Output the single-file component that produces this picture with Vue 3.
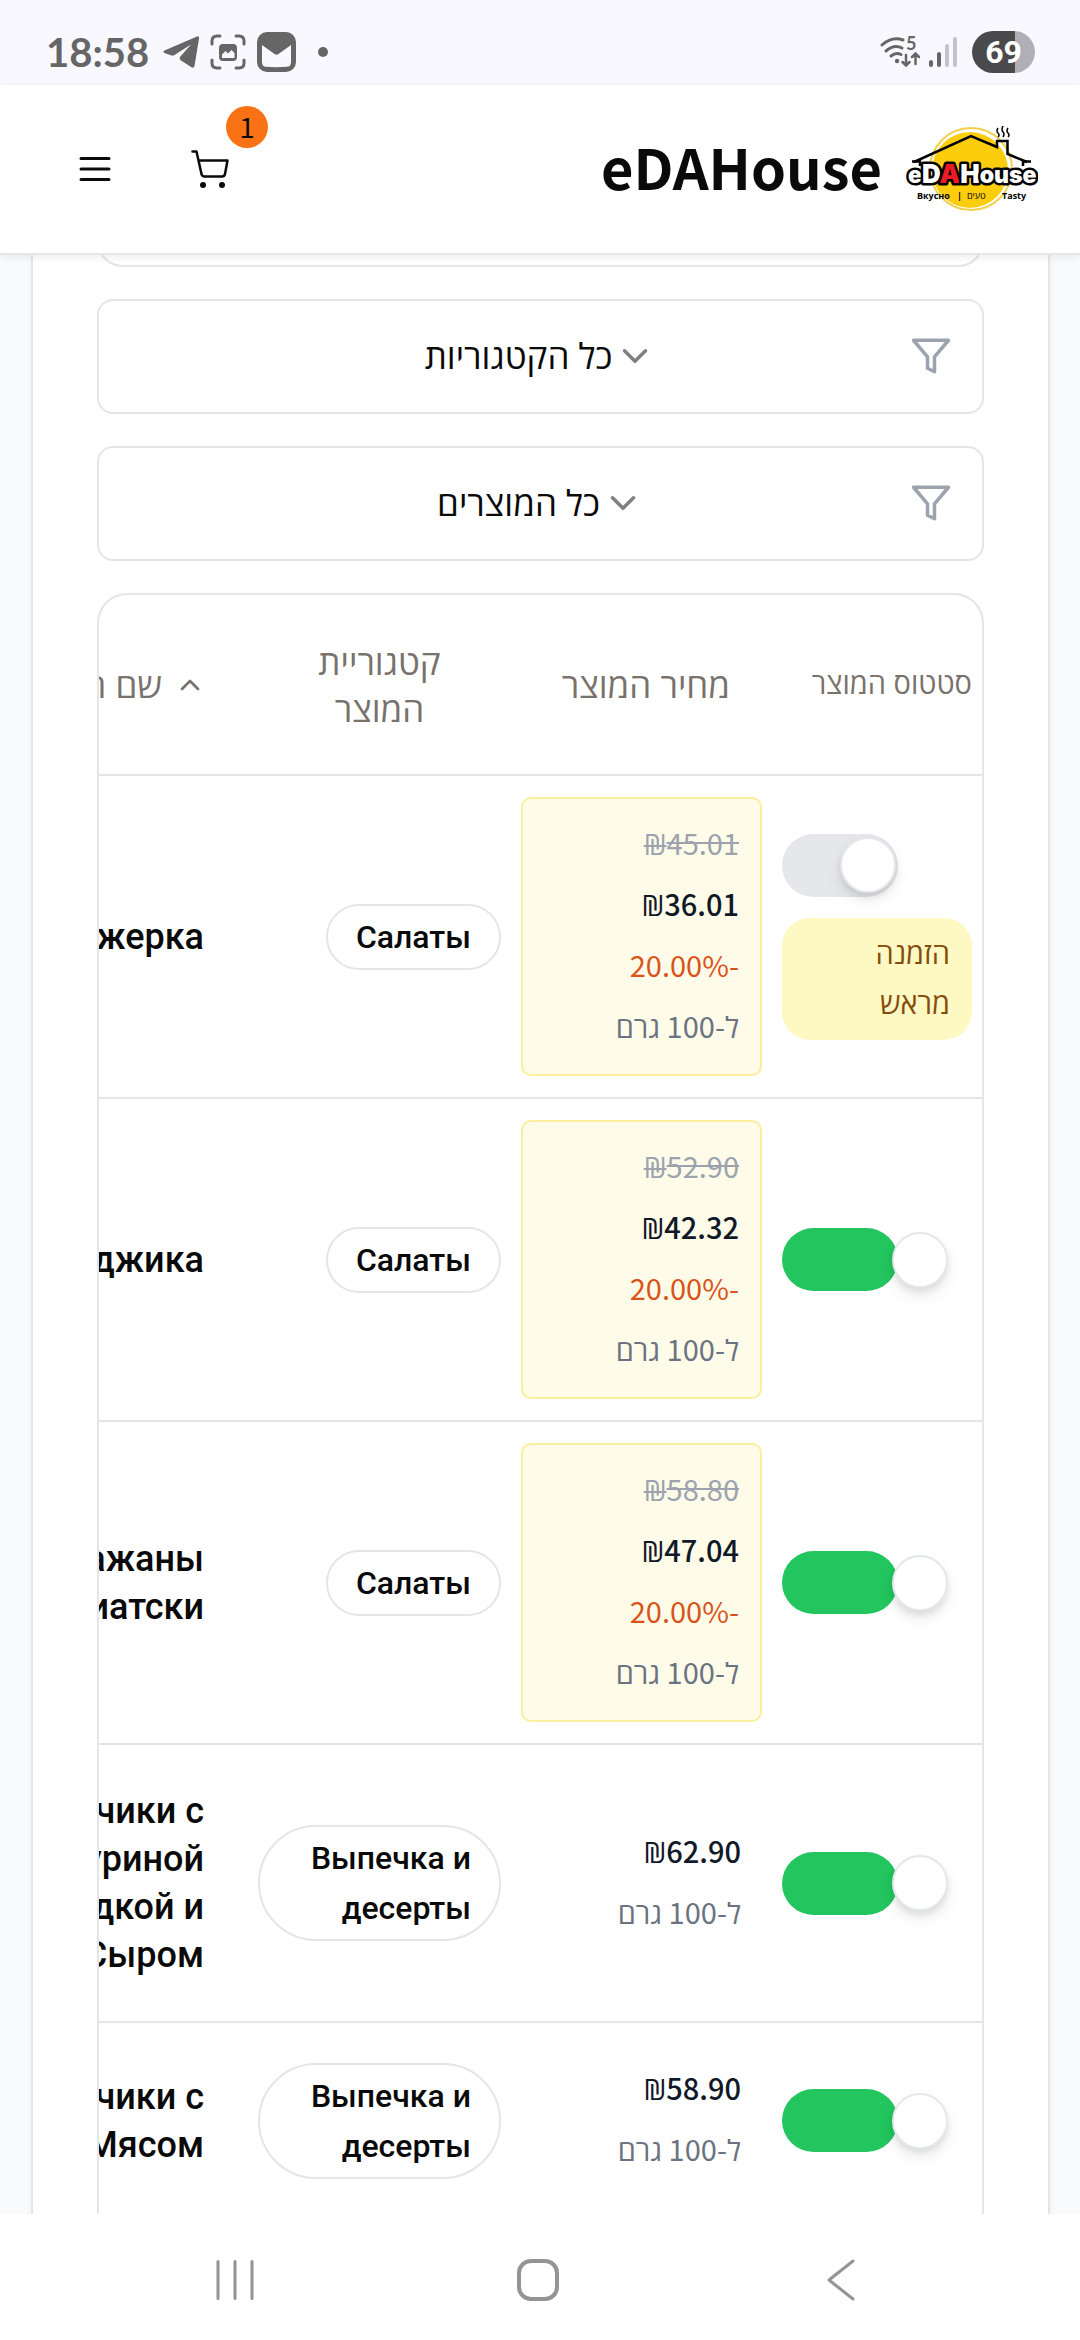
<script setup>
import { ref } from 'vue'

const categoryFilter = ref('all')
const productFilter = ref('all')

const products = ref([
  { id: 1, name: 'Аджерка', category: 'Салаты', oldPrice: '45.01', price: '36.01', discount: '-20.00%', active: false, preorder: true },
  { id: 2, name: 'Аджика', category: 'Салаты', oldPrice: '52.90', price: '42.32', discount: '-20.00%', active: true },
  { id: 3, name: 'Баклажаны по-азиатски', category: 'Салаты', oldPrice: '58.80', price: '47.04', discount: '-20.00%', active: true },
  { id: 4, name: 'Блинчики с Куриной грудкой и Сыром', category: 'Выпечка и десерты', price: '62.90', active: true },
  { id: 5, name: 'Блинчики с Мясом', category: 'Выпечка и десерты', price: '58.90', active: true },
])
</script>

<template>
  <div class="screen">
    <div class="status-bar">
      <div class="status-side">
        <span class="clock">18:58</span>
        <svg class="ic-telegram" width="36" height="32" viewBox="0 0 36 32" fill="#666"><path d="M1.500 14.500 34 .4Q36.300 0 36 2.500L31.500 30Q31 32.500 28.500 31.200L18 24.500Q15.500 22.500 17.600 20.200L28 8.500 11.500 19Q9.500 20 7 19L1.500 17Q-.8 15.800 1.500 14.500Z" /></svg>
        <svg class="ic-capture" width="36" height="36" viewBox="0 0 36 36">
          <path d="M2 10V7Q2 2 7 2H10M26 2H29Q34 2 34 7V10M34 26V29Q34 34 29 34H26M10 34H7Q2 34 2 29V26" fill="none" stroke="#666" stroke-width="3" stroke-linecap="round" />
          <rect x="9" y="10" width="18" height="17" rx="4" fill="#666" />
          <path d="M12 24V20.500L15.500 17 18 19.500 21.500 16 24.500 19V24Z" fill="#f9f8ff" />
        </svg>
        <svg width="39" height="40" viewBox="0 0 39 40">
          <rect width="39" height="40" rx="10" fill="#666" />
          <path d="M5 13 17.500 22Q19.500 23.500 21.500 22L34 13V30Q34 34.500 30 34.800 19.500 35.500 9 34.800 5 34.500 5 30Z" fill="#f9f8ff" />
        </svg>
        <span class="dot"></span>
      </div>
      <div class="status-side">
        <svg width="40" height="32" viewBox="0 0 40 32">
          <g fill="none" stroke="#666" stroke-width="3" stroke-linecap="round">
            <path d="M2 9Q12 0 23 4" /><path d="M6 15Q14 8 22 12" /><path d="M11 20Q16 16 21 18.500" />
            <path d="M26 19V29M22.500 26 26 29.500 29.500 26M35.500 28V18M32 21 35.500 17.500 39 21" stroke-width="2.500" />
          </g>
          <circle cx="17" cy="25" r="2.200" fill="#666" />
          <text x="26" y="14" font-family="Lato, sans-serif" font-weight="700" font-size="18" fill="#666">5</text>
        </svg>
        <svg class="ic-signal" width="28" height="30" viewBox="0 0 28 30" stroke-width="4" stroke-linecap="round">
          <path d="M2 25V28M10 17V28" stroke="#666" /><path d="M18 9V28M26 2V28" stroke="#c4c3c9" />
        </svg>
        <span class="battery">69</span>
      </div>
    </div>

    <header class="site-header">
      <nav class="header-actions">
        <button class="icon-btn" type="button" aria-label="תפריט">
          <svg width="32" height="26" viewBox="0 0 32 26" stroke="#0a0a0a" stroke-width="3" stroke-linecap="round"><path d="M2 2.500H30M2 13H30M2 23.500H30" /></svg>
        </button>
        <button class="icon-btn" type="button" aria-label="עגלה">
          <svg width="38" height="40" viewBox="0 0 38 40">
            <path d="M1.500 2.500H5.500L10.500 25Q11 27.500 13.500 27.500H31Q33.500 27.500 34 25L36.500 11.500H7.500" fill="none" stroke="#0a0a0a" stroke-width="2.500" stroke-linecap="round" stroke-linejoin="round" />
            <circle cx="12" cy="36" r="3" fill="#0a0a0a" /><circle cx="31" cy="36" r="3" fill="#0a0a0a" />
          </svg>
          <span class="cart-count">1</span>
        </button>
      </nav>
      <a class="brand" href="#">
        <span class="brand-name">eDAHouse</span>
        <svg width="132" height="86" viewBox="0 0 132 86" role="img" aria-label="eDAHouse">
          <circle cx="65" cy="43" r="41" fill="none" stroke="#f3cf4e" stroke-width="2" />
          <circle cx="64" cy="44" r="38" fill="#fbcd0c" />
          <g fill="none" stroke="#000" stroke-width="2.500">
            <path d="M8 36 65 10 91 21V15H101.500V28L121 36" /><path d="M6 35.500H14V40M125 35.500H117V40" />
            <path d="M92 2Q90 5 92 7T92 11M97 0Q95 4 97 6T97 11M102 2Q100 5 102 7T102 11" stroke-width="1.500" />
          </g>
          <g font-family="Inter, sans-serif" font-weight="900" font-size="23" paint-order="stroke" stroke="#000" stroke-width="5" stroke-linejoin="round" fill="#fff">
            <text x="2" y="56.500">e<tspan font-size="26">D</tspan><tspan font-size="26" fill="#ed1c24">A</tspan><tspan font-size="26">H</tspan>ouse</text>
          </g>
          <g font-family="'Open Sans', sans-serif" font-weight="700" font-size="9" fill="#000">
            <text x="11" y="73">Вкусно</text><text x="51" y="73">|</text><text x="61" y="73" font-weight="500">טעים</text><text x="96" y="73">Tasty</text>
          </g>
        </svg>
      </a>
    </header>

    <main class="page" dir="rtl">
      <section class="panel">
        <div class="panel-head"></div>

        <label class="filter">
          <svg class="funnel" width="42" height="42" viewBox="0 0 24 24" fill="none" stroke="#9ca3af" stroke-width="2" stroke-linejoin="round"><path d="M22 3H2l8 9.460V19l4 2v-8.540Z" /></svg>
          <svg width="42" height="42" viewBox="0 0 24 24" fill="none" stroke="#808080" stroke-width="2" stroke-linecap="round" stroke-linejoin="round"><path d="m6 9 6 6 6-6" /></svg>
          <select v-model="categoryFilter" aria-label="סינון לפי קטגוריה"><option value="all">כל הקטגוריות</option></select>
        </label>

        <label class="filter">
          <svg class="funnel" width="42" height="42" viewBox="0 0 24 24" fill="none" stroke="#9ca3af" stroke-width="2" stroke-linejoin="round"><path d="M22 3H2l8 9.460V19l4 2v-8.540Z" /></svg>
          <svg width="42" height="42" viewBox="0 0 24 24" fill="none" stroke="#808080" stroke-width="2" stroke-linecap="round" stroke-linejoin="round"><path d="m6 9 6 6 6-6" /></svg>
          <select v-model="productFilter" aria-label="סינון לפי מוצר"><option value="all">כל המוצרים</option></select>
        </label>

        <div class="table-wrap">
          <table>
            <colgroup><col class="c-status" /><col class="c-price" /><col class="c-category" /><col class="c-name" /></colgroup>
            <thead>
              <tr>
                <th class="th-status" scope="col">סטטוס המוצר</th>
                <th scope="col"><button class="sort" type="button">מחיר המוצר</button></th>
                <th scope="col"><button class="sort" type="button">קטגוריית המוצר</button></th>
                <th scope="col">
                  <button class="sort" type="button">
                    <svg width="32" height="32" viewBox="0 0 24 24" fill="none" stroke="#78716c" stroke-width="2" stroke-linecap="round" stroke-linejoin="round"><path d="m6 15 6-6 6 6" /></svg>
                    שם המוצר
                  </button>
                </th>
              </tr>
            </thead>
            <tbody>
              <tr v-for="p in products" :key="p.id">
                <td>
                  <div class="status">
                    <input v-model="p.active" class="switch" type="checkbox" role="switch" :aria-label="p.name" />
                    <span v-if="p.preorder" class="preorder">הזמנה מראש</span>
                  </div>
                </td>
                <td>
                  <div class="price" :class="{ sale: p.oldPrice }">
                    <s v-if="p.oldPrice"><span class="shekel">₪</span>{{ p.oldPrice }}</s>
                    <strong><span class="shekel">₪</span>{{ p.price }}</strong>
                    <span v-if="p.discount" class="discount">{{ p.discount }}</span>
                    <span class="unit">ל-100 גרם</span>
                  </div>
                </td>
                <td><span class="pill">{{ p.category }}</span></td>
                <td class="name">{{ p.name }}</td>
              </tr>
            </tbody>
          </table>
        </div>
      </section>
    </main>

    <nav class="system-nav">
      <button type="button" aria-label="Recents"><svg width="38" height="42" viewBox="0 0 38 42" stroke="#949494" stroke-width="3" stroke-linecap="round"><path d="M2 2.500V39.500M19 2.500V39.500M36 2.500V39.500" /></svg></button>
      <button type="button" aria-label="Home"><svg width="42" height="42" viewBox="0 0 42 42" fill="none" stroke="#949494" stroke-width="4"><rect x="2" y="2" width="38" height="38" rx="12" /></svg></button>
      <button type="button" aria-label="Back"><svg width="38" height="42" viewBox="0 0 38 42" fill="none" stroke="#949494" stroke-width="3" stroke-linecap="round" stroke-linejoin="round"><path d="M31 2 7 21 31 40" /></svg></button>
    </nav>
  </div>
</template>

<style>
body {
  margin: 0;
  background: #fff;
}
</style>

<style scoped>
* {
  box-sizing: border-box;
}
.screen {
  display: flex;
  flex-direction: column;
  height: 100vh;
  overflow: hidden;
  color: #0a0a0a;
  font-family: "Noto Sans CJK SC", "Open Sans", sans-serif;
}
button {
  border: 0;
  padding: 0;
  background: none;
  color: inherit;
  font: inherit;
}
svg {
  display: block;
  flex: none;
}

/* phone status bar */
.status-bar {
  display: flex;
  flex: none;
  justify-content: space-between;
  align-items: center;
  height: 85px;
  padding: 19px 45px 0 46px;
  background: #f9f8ff;
}
.status-side {
  display: flex;
  align-items: center;
}
.clock {
  margin-right: 14px;
  color: #666;
  font: 700 40px/40px Lato, sans-serif;
}
.ic-capture {
  margin: 0 11px;
}
.dot {
  width: 10px;
  height: 10px;
  margin-left: 22px;
  border-radius: 50%;
  background: #666;
}
.ic-signal {
  margin: 0 15px 0 9px;
}
.battery {
  width: 63px;
  border-radius: 21px;
  background: linear-gradient(90deg, #4a4a4c 68%, #b0afb5 68%);
  color: #fff;
  font: 700 32px/42px Roboto, sans-serif;
  text-align: center;
}

/* site header */
.site-header {
  position: relative;
  z-index: 1;
  display: flex;
  flex: none;
  justify-content: space-between;
  align-items: center;
  height: 170px;
  padding: 0 42px 0 79px;
  border-bottom: 2px solid #e5e7eb;
  background: #fff;
  box-shadow: 0 2px 8px rgba(0, 0, 0, 0.08);
}
.header-actions {
  display: flex;
  align-items: center;
  gap: 80px;
}
.icon-btn {
  position: relative;
}
.cart-count {
  position: absolute;
  right: -39px;
  bottom: 41px;
  width: 42px;
  height: 42px;
  border-radius: 50%;
  background: #f97316;
  font-size: 28px;
  line-height: 40px;
}
.brand {
  display: flex;
  align-items: center;
  gap: 24px;
  color: inherit;
  text-decoration: none;
}
.brand-name {
  padding-bottom: 6px;
  font-size: 56px;
  font-weight: 700;
  line-height: 64px;
}

/* page */
.page {
  flex: 1;
  min-height: 0;
  overflow: hidden;
  padding: 0 30px 0 31px;
  background: #f9fafb;
}
.panel {
  display: flex;
  flex-direction: column;
  gap: 32px;
  padding: 0 64px 64px;
  border: solid #e5e5e5;
  border-width: 0 2px;
  background: #fff;
  box-shadow: 0 0 6px rgba(0, 0, 0, 0.05);
}
.panel-head {
  height: 60px;
  margin-top: -48px;
  border: 2px solid #e5e5e5;
  border-radius: 26px;
}
.filter {
  position: relative;
  display: flex;
  justify-content: center;
  align-items: center;
  height: 115px;
  padding-bottom: 2px;
  border: 2px solid #e5e5e5;
  border-radius: 16px;
}
.filter .funnel {
  position: absolute;
  right: 30px;
}
.filter select {
  appearance: none;
  field-sizing: content;
  margin: 0;
  padding: 0 2px 0 0;
  border: 0;
  background: none;
  color: inherit;
  font: 400 35px/48px "Open Sans", sans-serif;
}

/* products table */
.table-wrap {
  overflow: hidden;
  border: 2px solid #e5e5e5;
  border-bottom: 0;
  border-radius: 30px 30px 0 0;
}
table {
  width: 1080px;
  table-layout: fixed;
  border-collapse: separate;
  border-spacing: 0;
}
.c-status {
  width: 210px;
}
.c-price {
  width: 261px;
}
.c-category {
  width: 263px;
}
th,
td {
  padding: 21px 10px;
  border-bottom: 2px solid #e5e5e5;
  text-align: right;
  vertical-align: middle;
}
th {
  height: 181px;
  padding-bottom: 21px;
  color: #78716c;
  font: 400 35px/47px "Open Sans", sans-serif;
}
.th-status {
  padding-bottom: 26px;
  font-size: 29px;
  white-space: nowrap;
}
.sort {
  display: flex;
  align-items: center;
  gap: 12px;
  padding: 0 32px;
  text-align: center;
}
.status {
  display: flex;
  flex-direction: column;
  align-items: flex-end;
  gap: 21px;
}
.switch {
  display: flex;
  align-items: center;
  width: 116px;
  height: 63px;
  margin: 0;
  border-radius: 32px;
  appearance: none;
  background: #e5e7eb;
  direction: ltr;
}
.switch::before {
  content: "";
  flex: none;
  width: 52px;
  height: 52px;
  margin-left: 58px;
  border: 2px solid #e5e7eb;
  border-radius: 50%;
  background: #fff;
  box-shadow: 0 8px 16px rgba(0, 0, 0, 0.08), 0 4px 6px rgba(0, 0, 0, 0.08);
}
.switch:checked {
  background: #22c55e;
}
.switch:checked::before {
  margin-left: 110px;
}
.preorder {
  align-self: stretch;
  padding: 10px 22px 12px;
  border-radius: 28px;
  background: #fef9c3;
  color: #854d0e;
  font: 400 29px/50px "Open Sans", sans-serif;
}
.price {
  display: flex;
  flex-direction: column;
  gap: 11px;
  padding: 18px 21px 24px;
  font-size: 29px;
  line-height: 50px;
}
.sale {
  border: 2px solid #fbee9c;
  border-radius: 10px;
  background: #fefce8;
}
.shekel {
  font-family: "Open Sans", sans-serif;
  line-height: 1;
}
.price s {
  color: #9ca3af;
}
.price strong {
  color: #111827;
  font-weight: 500;
}
.discount {
  color: #d9541a;
}
.unit {
  color: #6b7280;
}
.pill {
  display: inline-block;
  padding: 6px 28px;
  border: 2px solid #e5e5e5;
  border-radius: 60px;
  font: 500 32px/50px Roboto, sans-serif;
  vertical-align: top;
}
.name {
  padding: 42px 44px;
  padding-left: 94px;
  font: 500 36px/48px Roboto, sans-serif;
}

/* phone navigation bar */
.system-nav {
  display: flex;
  flex: none;
  justify-content: space-around;
  align-items: center;
  height: 126px;
  padding: 6px 89px 0 85px;
  background: #fff;
}
</style>
